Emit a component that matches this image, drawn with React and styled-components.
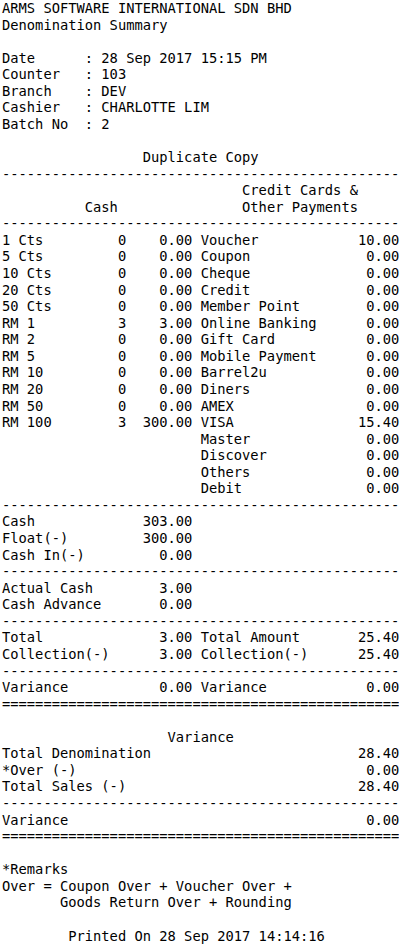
import React from 'react'
import styled, { createGlobalStyle } from 'styled-components'

const denominations = [
  ['1 Cts', '0', '0.00'],
  ['5 Cts', '0', '0.00'],
  ['10 Cts', '0', '0.00'],
  ['20 Cts', '0', '0.00'],
  ['50 Cts', '0', '0.00'],
  ['RM 1', '3', '3.00'],
  ['RM 2', '0', '0.00'],
  ['RM 5', '0', '0.00'],
  ['RM 10', '0', '0.00'],
  ['RM 20', '0', '0.00'],
  ['RM 50', '0', '0.00'],
  ['RM 100', '3', '300.00'],
]

const payments = [
  ['Voucher', '10.00'],
  ['Coupon', '0.00'],
  ['Cheque', '0.00'],
  ['Credit', '0.00'],
  ['Member Point', '0.00'],
  ['Online Banking', '0.00'],
  ['Gift Card', '0.00'],
  ['Mobile Payment', '0.00'],
  ['Barrel2u', '0.00'],
  ['Diners', '0.00'],
  ['AMEX', '0.00'],
  ['VISA', '15.40'],
  ['Master', '0.00'],
  ['Discover', '0.00'],
  ['Others', '0.00'],
  ['Debit', '0.00'],
]

const info = [
  ['Date', '28 Sep 2017 15:15 PM'],
  ['Counter', '103'],
  ['Branch', 'DEV'],
  ['Cashier', 'CHARLOTTE LIM'],
  ['Batch No', '2'],
]

function App() {
  const rows = payments.map((p, i) => ({ denom: denominations[i], pay: p }))

  return (
    <>
      <GlobalStyle />
      <Receipt>
        <Line>ARMS SOFTWARE INTERNATIONAL SDN BHD</Line>
        <Line>Denomination Summary</Line>
        <Blank />

        {info.map(([label, value]) => (
          <Field key={label}>
            <span>{label}</span>
            <span>:</span>
            <span>{value}</span>
          </Field>
        ))}
        <Blank />

        <Centered>Duplicate Copy</Centered>
        <Rule />
        <HeadRow>
          <span></span>
          <span>Credit Cards &amp;</span>
        </HeadRow>
        <HeadRow>
          <span>Cash</span>
          <span>Other Payments</span>
        </HeadRow>
        <Rule />

        {rows.map(({ denom, pay }) => (
          <DenomRow key={pay[0]}>
            <span>{denom ? denom[0] : ''}</span>
            <Num>{denom ? denom[1] : ''}</Num>
            <Num>{denom ? denom[2] : ''}</Num>
            <span></span>
            <span>{pay[0]}</span>
            <Num>{pay[1]}</Num>
          </DenomRow>
        ))}
        <Rule />

        <SumRow><span>Cash</span><Num>303.00</Num></SumRow>
        <SumRow><span>Float(-)</span><Num>300.00</Num></SumRow>
        <SumRow><span>Cash In(-)</span><Num>0.00</Num></SumRow>
        <Rule />
        <SumRow><span>Actual Cash</span><Num>3.00</Num></SumRow>
        <SumRow><span>Cash Advance</span><Num>0.00</Num></SumRow>
        <Rule />

        <SumRow>
          <span>Total</span><Num>3.00</Num><span></span>
          <span>Total Amount</span><Num>25.40</Num>
        </SumRow>
        <SumRow>
          <span>Collection(-)</span><Num>3.00</Num><span></span>
          <span>Collection(-)</span><Num>25.40</Num>
        </SumRow>
        <Rule />
        <SumRow>
          <span>Variance</span><Num>0.00</Num><span></span>
          <span>Variance</span><Num>0.00</Num>
        </SumRow>
        <Rule $char="=" />
        <Blank />

        <Centered>Variance</Centered>
        <Split><span>Total Denomination</span><span>28.40</span></Split>
        <Split><span>*Over (-)</span><span>0.00</span></Split>
        <Split><span>Total Sales (-)</span><span>28.40</span></Split>
        <Rule />
        <Split><span>Variance</span><span>0.00</span></Split>
        <Rule $char="=" />
        <Blank />

        <Line>*Remarks</Line>
        <Line>Over = Coupon Over + Voucher Over +</Line>
        <Indent>Goods Return Over + Rounding</Indent>
        <Blank />
        <Centered $shift>Printed On 28 Sep 2017 14:14:16</Centered>
      </Receipt>
    </>
  )
}

export default App

const Rule = ({ $char = '-' }) => <RuleLine>{$char.repeat(48)}</RuleLine>

const GlobalStyle = createGlobalStyle`
  body {
    margin: 0;
    background: #ffffff;
  }
`

const Receipt = styled.div`
  font-family: "DejaVu Sans Mono", "Liberation Mono", monospace;
  font-size: 13.75px;
  line-height: 16.57px;
  color: #000;
  width: 48ch;
  padding-left: 2px;
  white-space: pre;
`

const Line = styled.div`
  height: 16.57px;
`

const Blank = styled(Line)``

const RuleLine = styled(Line)`
  overflow: hidden;
`

const Centered = styled(Line)`
  text-align: center;
  padding-right: ${p => (p.$shift ? '1ch' : '0')};
`

const Indent = styled(Line)`
  padding-left: 7ch;
`

const Field = styled.div`
  display: grid;
  grid-template-columns: 10ch 2ch 1fr;
  height: 16.57px;
`

const HeadRow = styled.div`
  display: grid;
  grid-template-columns: 24ch 24ch;
  text-align: center;
  height: 16.57px;
`

const DenomRow = styled.div`
  display: grid;
  grid-template-columns: 9ch 6ch 8ch 1ch 15ch 9ch;
  height: 16.57px;
`

const SumRow = styled.div`
  display: grid;
  grid-template-columns: 15ch 8ch 1ch 15ch 9ch;
  height: 16.57px;
`

const Split = styled.div`
  display: flex;
  justify-content: space-between;
  height: 16.57px;
`

const Num = styled.span`
  text-align: right;
`
